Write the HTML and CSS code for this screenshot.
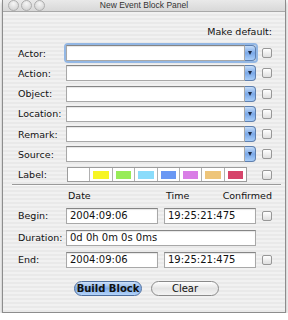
FILE: index.html
```html
<!DOCTYPE html>
<html lang="en">
  <head>
    <meta charset="UTF-8" />
    <title>New Event Block Panel</title>
    <link rel="stylesheet" href="styles.css">
  </head>
  <body>
    <div class="window">
      <!-- Title bar -->
      <div class="titlebar">
        <div class="lights">
          <span class="light"></span>
          <span class="light"></span>
          <span class="light"></span>
        </div>
        <div class="title">New Event Block Panel</div>
        <div></div>
      </div>

      <div class="content">
        <div class="defaults">Make default:</div>

        <!-- Event fields -->
        <div class="fields">
          <label class="lbl">Actor:</label>
          <div class="combo focused"><input type="text" value=""><span class="arrow"></span></div>
          <span class="check"></span>

          <label class="lbl">Action:</label>
          <div class="combo"><input type="text" value=""><span class="arrow"></span></div>
          <span class="check"></span>

          <label class="lbl">Object:</label>
          <div class="combo"><input type="text" value=""><span class="arrow"></span></div>
          <span class="check"></span>

          <label class="lbl">Location:</label>
          <div class="combo"><input type="text" value=""><span class="arrow"></span></div>
          <span class="check"></span>

          <label class="lbl">Remark:</label>
          <div class="combo"><input type="text" value=""><span class="arrow"></span></div>
          <span class="check"></span>

          <label class="lbl">Source:</label>
          <div class="combo"><input type="text" value=""><span class="arrow"></span></div>
          <span class="check"></span>

          <label class="lbl">Label:</label>
          <div class="swatches">
            <span class="swatch white"></span>
            <span class="swatch"><i style="background: #f7f524"></i></span>
            <span class="swatch"><i style="background: #98ec58"></i></span>
            <span class="swatch"><i style="background: #8adcfb"></i></span>
            <span class="swatch"><i style="background: #6a98f4"></i></span>
            <span class="swatch"><i style="background: #d97ee6"></i></span>
            <span class="swatch"><i style="background: #eec57a"></i></span>
            <span class="swatch"><i style="background: #d6446a"></i></span>
          </div>
          <span class="check"></span>
        </div>

        <hr class="sep">

        <!-- Time fields -->
        <div class="times">
          <span></span>
          <div class="head">Date</div>
          <div class="head split"><span>Time</span><span>Confirmed</span></div>

          <label class="lbl">Begin:</label>
          <input class="field" type="text" value="2004:09:06">
          <input class="field" type="text" value="19:25:21:475">
          <span class="check"></span>

          <label class="lbl">Duration:</label>
          <input class="field wide" type="text" value="0d 0h 0m 0s 0ms">
          <span></span>

          <label class="lbl">End:</label>
          <input class="field" type="text" value="2004:09:06">
          <input class="field" type="text" value="19:25:21:475">
          <span class="check"></span>
        </div>

        <div class="buttons">
          <button class="btn default">Build Block</button>
          <button class="btn">Clear</button>
        </div>
      </div>
    </div>
  </body>
</html>
```

FILE: styles.css
```css
* {
  margin: 0;
  padding: 0;
  box-sizing: border-box;
}

body {
  background: #ffffff;
  font-family: "DejaVu Sans", sans-serif;
  font-size: 9.5px;
  color: #111;
}

.window {
  width: 284px;
  height: 313px;
  margin-left: 2px;
  border: 1px solid #8d8d8d;
  border-top: none;
  background: repeating-linear-gradient(#f1f1f1 0, #f1f1f1 2px, #e9e9e9 2px, #e9e9e9 4px);
  box-shadow: 0 2px 4px rgba(0, 0, 0, 0.35);
}

/* Title bar */
.titlebar {
  height: 12px;
  display: grid;
  grid-template-columns: 1fr auto 1fr;
  align-items: center;
  background: linear-gradient(#e9e9e9, #d8d8d8);
  border-bottom: 1px solid #a8a8a8;
}

.lights {
  display: flex;
  gap: 2px;
  padding-left: 5px;
  align-self: start;
}

.light {
  width: 11px;
  height: 11px;
  border-radius: 50%;
  border: 1px solid #adadad;
  background: radial-gradient(circle at 50% 30%, #f6f6f6, #cbcbcb);
}

.title {
  font-family: "Liberation Sans", sans-serif;
  font-size: 8.5px;
  color: #333;
  line-height: 11px;
}

.content {
  padding: 13px 13px 0 15px;
}

.defaults {
  text-align: right;
  line-height: 13px;
  margin-bottom: 7px;
}

.lbl {
  white-space: nowrap;
}

/* Upper grid */
.fields {
  display: grid;
  grid-template-columns: 42px 190px 10px;
  column-gap: 6px;
  row-gap: 4.3px;
  grid-auto-rows: 16px;
  align-items: center;
}

.combo {
  display: flex;
  height: 16px;
}

.combo input,
.field {
  height: 16px;
  border: 1px solid #a8a8a8;
  border-top-color: #858585;
  background: #fff;
  box-shadow: inset 0 1px 1px rgba(0, 0, 0, 0.1);
  font-family: "DejaVu Sans", sans-serif;
  font-size: 10px;
  color: #111;
  padding: 0 3px;
  outline: none;
  min-width: 0;
}

.combo input {
  flex: 1;
}

.combo.focused {
  box-shadow: 0 0 0 2px #93b7e4;
  border-radius: 2px;
}

.arrow {
  width: 11px;
  height: 16px;
  border: 1px solid #5e7fae;
  border-left: none;
  border-radius: 0 4px 4px 0;
  background: linear-gradient(#c6ddf8, #7aa8e8 50%, #a8cdf8);
  display: flex;
  align-items: center;
  justify-content: center;
}

.arrow::after {
  content: "";
  border-left: 2.5px solid transparent;
  border-right: 2.5px solid transparent;
  border-top: 4px solid #1d2a44;
}

.check {
  width: 10px;
  height: 10px;
  border: 1px solid #979797;
  border-radius: 2px;
  background: linear-gradient(#ffffff, #dedede);
}

.swatches {
  display: flex;
  height: 15px;
  width: 180px;
  margin-left: 1px;
  border: 1px solid #9c9c9c;
  background: #fff;
}

.swatch {
  flex: 1;
  border-left: 1px solid #b0b0b0;
  padding: 2.5px 3px;
  display: flex;
}

.swatch:first-child {
  border-left: none;
}

.swatch i {
  flex: 1;
}

.sep {
  border: none;
  border-top: 1px solid #9a9a9a;
  border-bottom: 1px solid #fafafa;
  margin: 1px -9px 0 -6px;
}

/* Lower grid */
.times {
  display: grid;
  grid-template-columns: 42px 92px 92px 10px;
  column-gap: 6px;
  row-gap: 6px;
  grid-template-rows: 12px 16px 16px 16px;
  align-items: center;
  margin-top: 4px;
}

.head {
  line-height: 12px;
  padding-left: 2px;
}

.head.split {
  grid-column: 3 / 5;
  display: flex;
  justify-content: space-between;
}

.field {
  width: 100%;
}

.field.wide {
  grid-column: 2 / 4;
}

.buttons {
  display: flex;
  justify-content: center;
  gap: 9px;
  margin-top: 13px;
  padding-left: 3px;
}

.btn {
  width: 68px;
  height: 15px;
  border-radius: 8px;
  border: 1px solid #8a8a8a;
  background: linear-gradient(#ffffff, #e4e4e4 50%, #f4f4f4);
  font-family: "DejaVu Sans", sans-serif;
  font-size: 10px;
  color: #111;
}

.btn.default {
  border-color: #4f6f9f;
  background: linear-gradient(#cfe2fa, #7fabe6 50%, #b5d5fb);
  font-weight: bold;
}
```
